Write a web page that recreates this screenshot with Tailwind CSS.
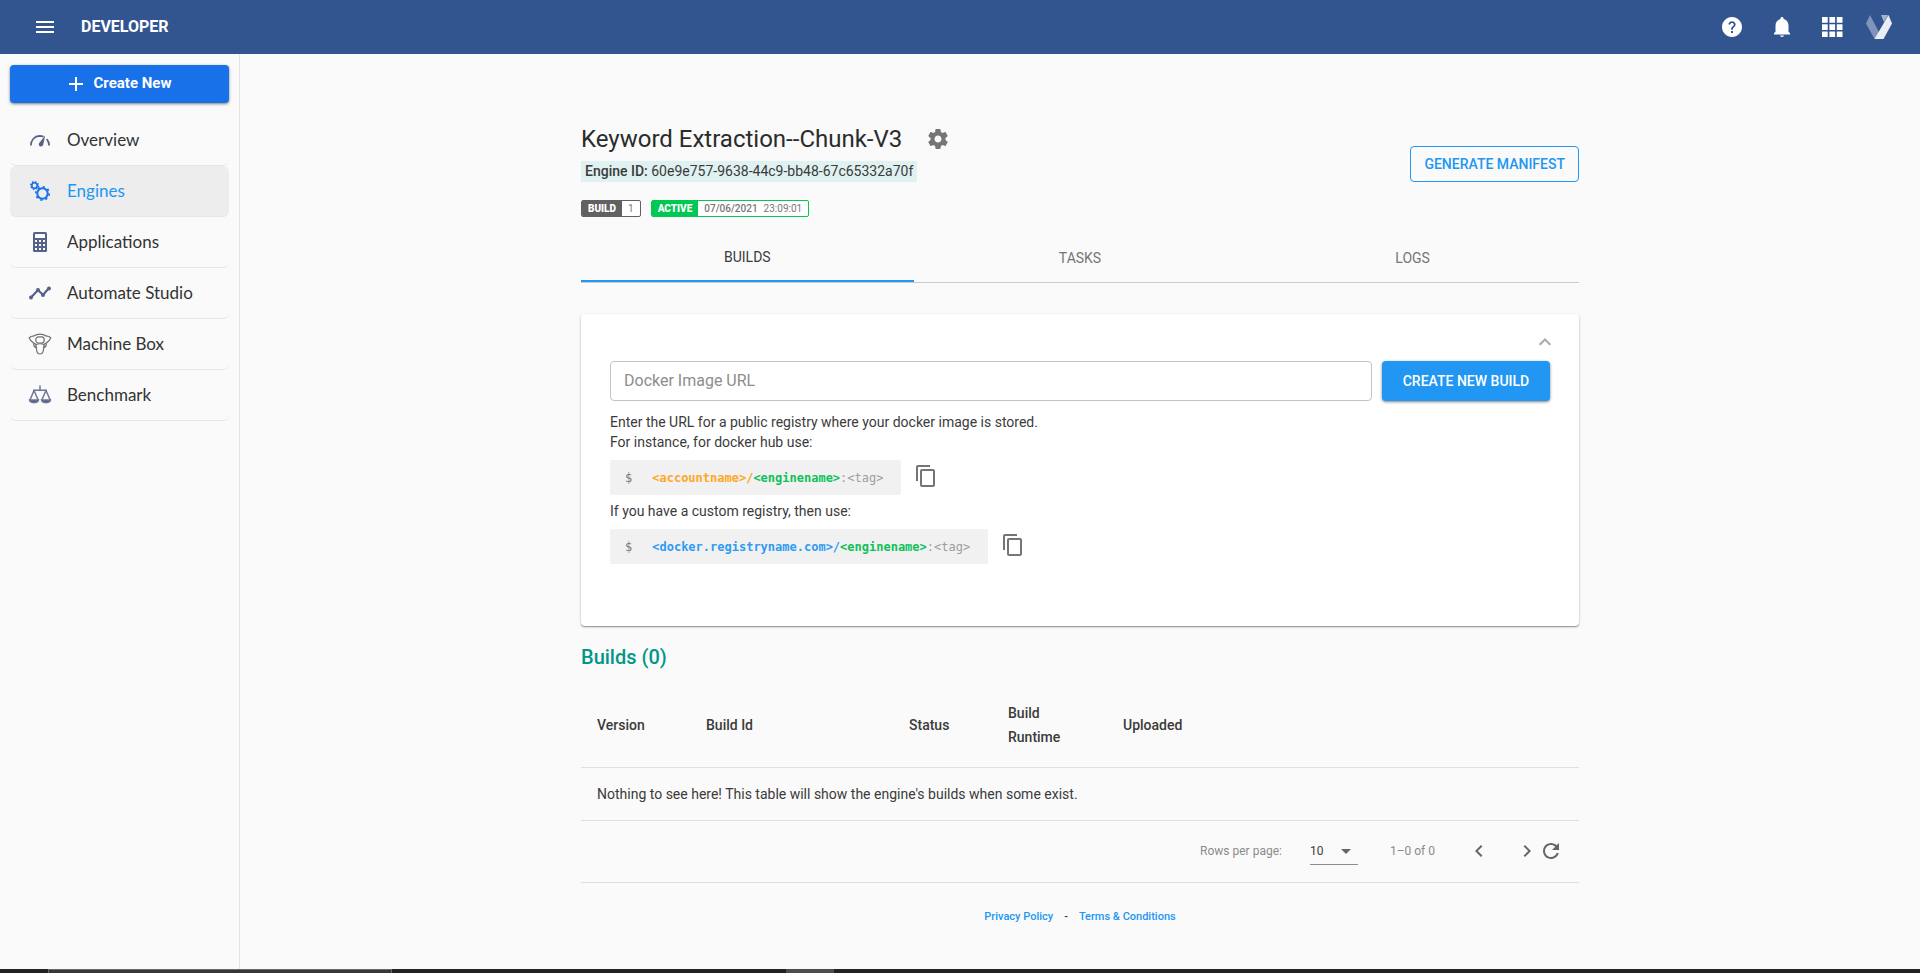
<!DOCTYPE html>
<html lang="en">
<head>
<meta charset="utf-8">
<meta name="viewport" content="width=device-width, initial-scale=1">
<title>Developer</title>
<script src="https://cdn.jsdelivr.net/npm/@tailwindcss/browser@4"></script>
</head>
<body class="flex min-h-screen flex-col bg-[#fafafa] font-['Roboto',sans-serif] text-sm text-[#3b3b3b]">
<header class="flex h-[54px] shrink-0 items-center bg-[#325590] pr-7 pl-[33px] text-white">
  <button aria-label="Menu" class="flex size-6 items-center justify-center">
    <svg class="size-6" viewBox="0 0 24 24" fill="currentColor"><path d="M3 18h18v-2H3v2zm0-5h18v-2H3v2zm0-7v2h18V6H3z"/></svg>
  </button>
  <span class="ml-6 text-base font-bold">DEVELOPER</span>
  <div class="ml-auto flex items-center gap-[26px]">
    <button aria-label="Help"><svg class="size-6" viewBox="0 0 24 24" fill="currentColor"><path d="M12 2C6.480 2 2 6.480 2 12s4.480 10 10 10 10-4.480 10-10S17.520 2 12 2zm1 16h-2v-2h2v2zm1.600-6.200-.9.800c-.5.500-.8 1-.8 2.200h-1.800v-.5c0-1.100.4-1.900 1-2.500l1.200-1.100c.3-.3.5-.7.5-1.200 0-1-.8-1.600-1.800-1.600s-1.800.7-1.800 1.700H8.400C8.400 7.600 10 6.200 12 6.200s3.600 1.300 3.600 3.200c0 .9-.4 1.700-1 2.400z"/></svg></button>
    <button aria-label="Notifications"><svg class="size-6" viewBox="0 0 24 24" fill="currentColor"><path d="M12 22c1.100 0 2-.6 2-1.400h-4c0 .8.900 1.400 2 1.400zM18.500 17V10.500c0-3.200-1.900-5.800-5-6.500v-.6C13.500 2.600 12.800 2 12 2s-1.500.6-1.500 1.400V4c-3.100.7-5 3.300-5 6.500V17L4 18v1.500h16V18z"/></svg></button>
    <button aria-label="Apps"><svg class="size-6" viewBox="0 0 24 24" fill="currentColor"><path d="M2 2h5.700v5.700H2zM9.400 2h5.700v5.700H9.400zM16.800 2h5.700v5.700h-5.700zM2 9.200h5.700v5.700H2zM9.400 9.200h5.700v5.700H9.400zM16.800 9.200h5.700v5.700h-5.700zM2 16.400h5.700v5.700H2zM9.400 16.400h5.700v5.700H9.400zM16.800 16.400h5.700v5.700h-5.700z"/></svg></button>
    <a href="#" aria-label="Veritone" class="-ml-1"><svg class="h-6 w-[26px]" viewBox="0 0 26 24"><path fill="#8093bd" d="M4 0 0 8.500 8.500 24h8L4 0z"/><path fill="#a5b2cf" d="M15 0h7l-4 7z"/><path fill="#e9edf5" d="m22.500 0 3.500 8.500L17.500 24h-9z"/></svg></a>
  </div>
</header>

<div class="flex grow">
  <aside class="w-60 shrink-0 border-r border-[#e5e5e5] px-[10px] pt-[11px]">
    <button class="flex h-[38px] w-full items-center justify-center gap-[10px] rounded bg-[#1871e8] text-[15px] font-bold text-white shadow-[0_1px_3px_rgba(0,0,0,0.5)]">
      <svg class="size-4" viewBox="0 0 16 16" stroke="currentColor" stroke-width="2"><path d="M8 1v14M1 8h14"/></svg>
      Create New
    </button>
    <nav class="mt-3 font-['Lato',sans-serif] text-[17px] text-[#333]">
      <a href="#" class="flex h-[51px] items-center rounded-md border-b border-[#e7e7e7] pl-[18px]">
        <svg class="mr-[15px] size-6" viewBox="0 0 24 24" fill="none" stroke="#56618a" stroke-width="1.700"><path d="M2.900 17.500c0-5.500 3.800-9.400 8.600-9.600 1.500 0 2.900.3 4 .9M18.700 11.200c1.500 1.600 2.400 3.800 2.400 6.300"/><path fill="#56618a" stroke="none" d="m17.200 7.600-1.900 8.700c-.3 1.600-1.500 2.500-2.900 2.200-1.600-.4-2.100-2-1.200-3.400z"/></svg>
        Overview</a>
      <a href="#" aria-current="page" class="flex h-[51px] items-center rounded-md border-b border-[#e7e7e7] bg-[#ededed] pl-[18px] text-[#2196f3]">
        <svg class="mr-[15px] size-6" viewBox="0 0 24 24" fill="none" stroke="#1871e8"><circle cx="6.500" cy="6.500" r="2.700" stroke-width="1.600"/><circle cx="6.500" cy="6.500" r="3.800" stroke-width="1.500" stroke-dasharray="1.500 1.480"/><circle cx="14.500" cy="14.500" r="5.200" stroke-width="2"/><circle cx="14.500" cy="14.500" r="6.700" stroke-width="1.700" stroke-dasharray="2.200 3.062"/></svg>
        Engines</a>
      <a href="#" class="flex h-[51px] items-center rounded-md border-b border-[#e7e7e7] pl-[18px]">
        <svg class="mr-[15px] size-6" viewBox="0 0 24 24"><rect x="5" y="2" width="14" height="20" rx="1.500" fill="#56618a"/><path fill="#fafafa" d="M7 4h10v4H7zM7 10h2v2H7zM11 10h2v2h-2zM15 10h2v2h-2zM7 14h2v2H7zM11 14h2v2h-2zM15 14h2v2h-2zM7 18h2v2H7zM11 18h2v2h-2zM15 18h2v2h-2z"/></svg>
        Applications</a>
      <a href="#" class="flex h-[51px] items-center rounded-md border-b border-[#e7e7e7] pl-[18px]">
        <svg class="mr-[15px] size-6" viewBox="0 0 24 24" fill="#56618a"><path fill="none" stroke="#56618a" stroke-width="2.200" d="m3 16.500 7-7.500 5 5 6-7"/><circle cx="3" cy="16.500" r="2"/><circle cx="10" cy="9" r="2"/><circle cx="15" cy="14" r="2"/><circle cx="21" cy="7.500" r="2"/></svg>
        Automate Studio</a>
      <a href="#" class="flex h-[51px] items-center rounded-md border-b border-[#e7e7e7] pl-[18px]">
        <svg class="mr-[15px] size-6" viewBox="0 0 24 24" fill="none" stroke="#707070" stroke-width="1.200"><path d="M12 2.200c2.600 0 4.500.6 6 1.700 2 .2 3.700.8 4.800 1.800-.4 2.100-2.200 3.300-3.800 4.800-.8.900-1.700 1.600-3 1.900-1.500-.9-6.500-.9-8 0-1.300-.3-2.200-1-3-1.900C3.400 9 1.600 7.800 1.200 5.700 2.300 4.700 4 4.100 6 3.900c1.500-1.100 3.400-1.700 6-1.700z"/><rect x="7.800" y="4.800" width="8.400" height="6.200" rx="2.800"/><path d="m5.600 11.500.5 2.700 2 .8M18.400 11.500l-.5 2.700-2 .8M8 12.400l.6 5.600c.4 3 1.600 4 3.400 4s3-1 3.400-4l.6-5.600M6.200 14.200l2.300 2M17.800 14.200l-2.300 2"/></svg>
        Machine Box</a>
      <a href="#" class="flex h-[51px] items-center rounded-md border-b border-[#e7e7e7] pl-[18px]">
        <svg class="mr-[15px] size-6" viewBox="0 0 24 24" fill="none" stroke="#6d7697" stroke-width="1.500"><path d="M12 2.500v5M5 7.200h14M6 7.500 2 17M6 7.500l4.200 9.500M18 7.500 13.800 17M18 7.500l4.200 9.500"/><path fill="#56618a" d="M1.500 17h9c-.3 1.800-1.500 2.700-4.500 2.700S1.800 18.800 1.500 17zM13.500 17h9c-.3 1.800-1.500 2.700-4.500 2.700s-4.200-.9-4.500-2.700z"/></svg>
        Benchmark</a>
    </nav>
  </aside>

  <main class="min-w-0 grow px-6 pt-[67px]">
    <div class="mx-auto w-full max-w-[998px]">
      <div class="flex items-start justify-between">
        <div>
          <div class="flex h-9 items-center gap-6">
            <h1 class="text-2xl text-[#2b2b2b]">Keyword Extraction--Chunk-V3</h1>
            <button aria-label="Settings"><svg class="size-6 text-[#757575]" viewBox="0 0 24 24" fill="currentColor"><path d="M19.430 12.980c.04-.32.07-.64.07-.98s-.03-.66-.07-.98l2.110-1.650c.19-.15.24-.42.12-.64l-2-3.460c-.12-.22-.39-.3-.61-.22l-2.490 1c-.52-.4-1.080-.73-1.690-.98l-.38-2.650C14.460 2.180 14.250 2 14 2h-4c-.25 0-.46.18-.49.42l-.38 2.650c-.61.25-1.170.59-1.690.98l-2.490-1c-.23-.09-.49 0-.61.22l-2 3.460c-.13.22-.07.49.12.64l2.110 1.650c-.04.32-.07.65-.07.98s.03.66.07.98l-2.110 1.650c-.19.15-.24.42-.12.64l2 3.460c.12.22.39.3.61.22l2.490-1c.52.4 1.080.73 1.690.98l.38 2.650c.03.24.24.42.49.42h4c.25 0 .46-.18.49-.42l.38-2.650c.61-.25 1.170-.59 1.690-.98l2.490 1c.23.09.49 0 .61-.22l2-3.460c.12-.22.07-.49-.12-.64l-2.110-1.650zM12 15.500c-1.930 0-3.500-1.570-3.500-3.500s1.570-3.500 3.500-3.500 3.500 1.570 3.500 3.500-1.570 3.500-3.500 3.500z"/></svg></button>
          </div>
          <p class="mt-1 w-fit bg-[#dff1f0] px-1 leading-[21px]"><span class="font-medium">Engine ID:</span> 60e9e757-9638-44c9-bb48-67c65332a70f</p>
          <div class="mt-[18px] flex gap-[10px] text-[10px] leading-[15px]">
            <span class="flex overflow-hidden rounded-xs border border-[#616161] bg-white"><b class="bg-[#616161] px-[6px] font-black text-white">BUILD</b><span class="px-[6px] text-[#777]">1</span></span>
            <span class="flex overflow-hidden rounded-xs border border-[#00c853] bg-white text-[#777]"><b class="bg-[#00c853] px-[6px] font-black text-white">ACTIVE</b><b class="pl-[6px] font-medium">07/06/2021</b><span class="px-[6px]">23:09:01</span></span>
          </div>
        </div>
        <button class="mt-[25px] h-9 rounded border border-[#2196f3] px-[13px] font-medium text-[#2196f3]">GENERATE MANIFEST</button>
      </div>

      <div role="tablist" class="mt-4 grid h-[50px] grid-cols-3 border-b border-[#cacaca] text-[#757575]">
        <button role="tab" aria-selected="true" class="border-b-2 border-[#2196f3] text-[#3b3b3b]">BUILDS</button>
        <button role="tab" aria-selected="false">TASKS</button>
        <button role="tab" aria-selected="false">LOGS</button>
      </div>

      <section class="mt-[31px] h-[312px] rounded bg-white px-[29px] pt-4 shadow-[0_1px_3px_rgba(0,0,0,0.2),0_1px_1px_rgba(0,0,0,0.3)]">
        <div class="flex justify-end"><button aria-label="Collapse" class="-mr-[7px]"><svg class="size-6 text-[#aaa]" viewBox="0 0 24 24" fill="none" stroke="currentColor" stroke-width="2"><path d="m6.700 14.800 5.300-5.300 5.300 5.300"/></svg></button></div>
        <form class="mt-[7px] flex gap-[10px]">
          <input type="text" aria-label="Docker Image URL" placeholder="Docker Image URL" class="h-10 min-w-0 grow rounded border border-[#c4c4c4] px-[13px] pb-[2px] text-base placeholder:text-[#8d8d8d]">
          <button type="button" class="h-10 w-[168px] rounded bg-[#2196f3] font-medium text-white shadow-[0_1px_3px_rgba(0,0,0,0.5)]">CREATE NEW BUILD</button>
        </form>
        <p class="mt-[11px] leading-5">Enter the URL for a public registry where your docker image is stored.<br>For instance, for docker hub use:</p>
        <div class="mt-2 flex items-start gap-[13px]">
          <code class="flex h-[35px] items-center rounded-xs bg-[#f1f1f1] pr-[18px] pl-[15px] font-['DejaVu_Sans_Mono',monospace] text-xs text-[#9e9e9e]"><span class="mr-5 text-[#777]">$</span><b class="text-[#ffa726]">&lt;accountname&gt;/</b><b class="text-[#0fc15b]">&lt;enginename&gt;</b>:&lt;tag&gt;</code>
          <button aria-label="Copy" class="mt-1"><svg class="size-6 text-[#757575]" viewBox="0 0 24 24" fill="currentColor"><path d="M16 1H4c-1.100 0-2 .9-2 2v14h2V3h12V1zm3 4H8c-1.100 0-2 .9-2 2v14c0 1.100.9 2 2 2h11c1.100 0 2-.9 2-2V7c0-1.100-.9-2-2-2zm0 16H8V7h11v14z"/></svg></button>
        </div>
        <p class="mt-[6px] leading-5">If you have a custom registry, then use:</p>
        <div class="mt-2 flex items-start gap-[13px]">
          <code class="flex h-[35px] items-center rounded-xs bg-[#f1f1f1] pr-[18px] pl-[15px] font-['DejaVu_Sans_Mono',monospace] text-xs text-[#9e9e9e]"><span class="mr-5 text-[#777]">$</span><b class="text-[#2f9bf3]">&lt;docker.registryname.com&gt;/</b><b class="text-[#0fc15b]">&lt;enginename&gt;</b>:&lt;tag&gt;</code>
          <button aria-label="Copy" class="mt-1"><svg class="size-6 text-[#757575]" viewBox="0 0 24 24" fill="currentColor"><path d="M16 1H4c-1.100 0-2 .9-2 2v14h2V3h12V1zm3 4H8c-1.100 0-2 .9-2 2v14c0 1.100.9 2 2 2h11c1.100 0 2-.9 2-2V7c0-1.100-.9-2-2-2zm0 16H8V7h11v14z"/></svg></button>
        </div>
      </section>

      <h2 class="mt-[17px] text-xl font-medium text-[#009688]">Builds (0)</h2>
      <table class="mt-[13px] w-full table-fixed text-left">
        <colgroup><col class="w-[109px]"><col class="w-[203px]"><col class="w-[99px]"><col class="w-[115px]"><col></colgroup>
        <thead><tr class="h-[83px] border-b border-[#e0e0e0] leading-6">
          <th class="pl-4 font-medium">Version</th><th class="pl-4 font-medium">Build Id</th><th class="pl-4 font-medium">Status</th><th class="pl-4 font-medium">Build<br>Runtime</th><th class="pl-4 font-medium">Uploaded</th>
        </tr></thead>
        <tbody><tr class="h-[53px] border-b border-[#e0e0e0]"><td colspan="5" class="pl-4">Nothing to see here! This table will show the engine's builds when some exist.</td></tr></tbody>
      </table>
      <div class="flex h-[62px] items-center justify-end border-b border-[#e0e0e0] pr-4 text-xs text-[#8a8a8a]">
        <label for="rows">Rows per page:</label>
        <div class="relative ml-7 border-b border-[#8d8d8d]">
          <select id="rows" class="h-[26px] w-12 appearance-none text-xs text-[#3b3b3b]"><option>10</option></select>
          <svg class="pointer-events-none absolute top-0 right-0 size-6 text-[#666]" viewBox="0 0 24 24" fill="currentColor"><path d="m7 11 5 5 5-5z"/></svg>
        </div>
        <span class="ml-8">1–0 of 0</span>
        <button aria-label="Previous page" class="ml-8"><svg class="size-6 text-[#666]" viewBox="0 0 24 24" fill="currentColor"><path d="M15.410 7.410 14 6l-6 6 6 6 1.410-1.410L10.830 12z"/></svg></button>
        <button aria-label="Next page" class="ml-6"><svg class="size-6 text-[#666]" viewBox="0 0 24 24" fill="currentColor"><path d="M10 6 8.590 7.410 13.170 12l-4.580 4.590L10 18l6-6z"/></svg></button>
        <button aria-label="Refresh"><svg class="size-6 text-[#666]" viewBox="0 0 24 24" fill="currentColor"><path d="M17.650 6.350C16.200 4.900 14.210 4 12 4c-4.420 0-7.990 3.580-7.990 8s3.570 8 7.990 8c3.730 0 6.840-2.550 7.730-6h-2.080c-.82 2.330-3.040 4-5.650 4-3.310 0-6-2.690-6-6s2.690-6 6-6c1.660 0 3.140.69 4.220 1.780L13 11h7V4l-2.350 2.350z"/></svg></button>
      </div>
      <footer class="flex items-center justify-center gap-[11px] pt-[26px] text-[11px] font-medium leading-4">
        <a href="#" class="text-[#2196f3]">Privacy Policy</a><span>-</span><a href="#" class="text-[#2196f3]">Terms &amp; Conditions</a>
      </footer>
    </div>
  </main>
</div>
<div class="flex h-1 shrink-0 bg-[#202025]"><div class="ml-12 w-[344px] border-x border-t border-[#656b66] bg-[#333735]"></div><div class="ml-[394px] w-12 bg-[#4b4d50]"></div></div>
</body>
</html>
